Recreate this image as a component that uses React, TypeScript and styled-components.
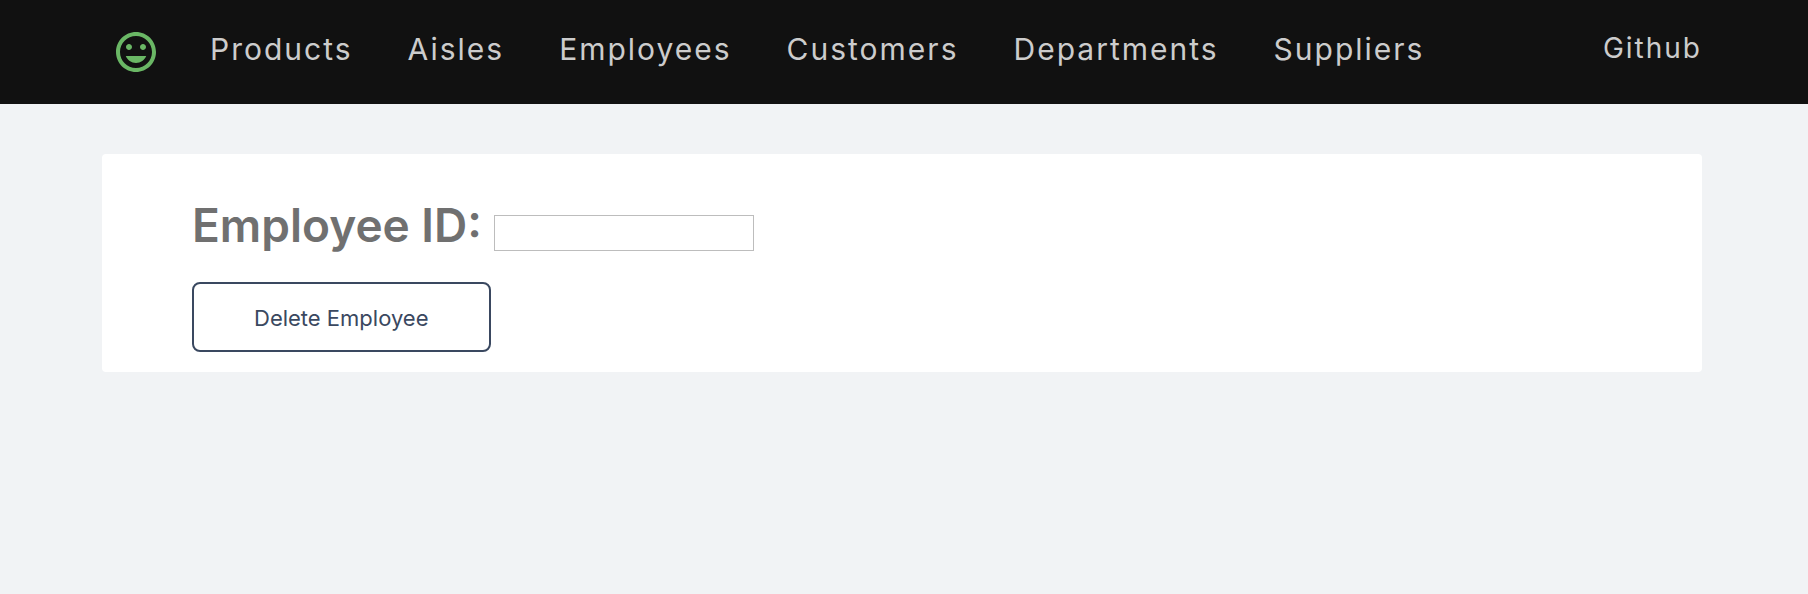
import React from 'react';
import styled, { createGlobalStyle } from 'styled-components';
import { MdInsertEmoticon } from 'react-icons/md';

const GlobalStyle = createGlobalStyle`
  * { box-sizing: border-box; }
  body {
    margin: 0;
    background: #f1f3f5;
    font-family: Inter, "Liberation Sans", sans-serif;
  }
`;

const NavBar = styled.nav`
  display: flex;
  align-items: center;
  height: 104px;
  padding: 0 106px 0 112px;
  background: #111;
`;

const HomeLink = styled.a`
  display: flex;
  color: #6ab765;
`;

const NavList = styled.ul`
  display: flex;
  flex: 1;
  gap: 55px;
  margin: 0;
  padding: 0 0 6px 50px;
  list-style: none;
`;

const NavLink = styled.a<{ $small?: boolean }>`
  display: block;
  color: #ccc;
  font-size: ${({ $small }) => ($small ? 28 : 30)}px;
  line-height: 40px;
  letter-spacing: 2px;
  text-decoration: none;
`;

const NavEnd = styled.div`
  padding-bottom: 8px;
`;

const Page = styled.main`
  padding: 50px 106px 50px 102px;
`;

const Card = styled.form`
  padding: 46px 90px 20px;
  border-radius: 4px;
  background: #fff;
`;

const Field = styled.div`
  display: flex;
  align-items: flex-end;
  gap: 12px;
  margin-bottom: 31px;
`;

const FieldLabel = styled.label`
  color: #707070;
  font-size: 46px;
  font-weight: 600;
  line-height: 51px;
`;

const TextInput = styled.input`
  width: 260px;
  height: 36px;
  padding: 0 8px;
  border: 1px solid #bdbdbd;
  border-radius: 0;
  background: #fff;
  font: inherit;
  font-size: 22px;
`;

const Button = styled.button`
  display: block;
  height: 70px;
  padding: 2px 60px 0;
  border: 2px solid #3a4860;
  border-radius: 8px;
  background: #fff;
  color: #3a4860;
  font: inherit;
  font-size: 22px;
`;

const links = ['Products', 'Aisles', 'Employees', 'Customers', 'Departments', 'Suppliers'];

export default function App() {
  return (
    <>
      <GlobalStyle />
      <NavBar>
        <HomeLink href="#home" aria-label="Home">
          <MdInsertEmoticon size={48} />
        </HomeLink>
        <NavList>
          {links.map((name) => (
            <li key={name}>
              <NavLink href={`#${name.toLowerCase()}`}>{name}</NavLink>
            </li>
          ))}
        </NavList>
        <NavEnd>
          <NavLink $small href="#github">Github</NavLink>
        </NavEnd>
      </NavBar>
      <Page>
        <Card onSubmit={(event) => event.preventDefault()}>
          <Field>
            <FieldLabel htmlFor="employee-id">Employee ID:</FieldLabel>
            <TextInput id="employee-id" type="text" />
          </Field>
          <Button type="submit">Delete Employee</Button>
        </Card>
      </Page>
    </>
  );
}
